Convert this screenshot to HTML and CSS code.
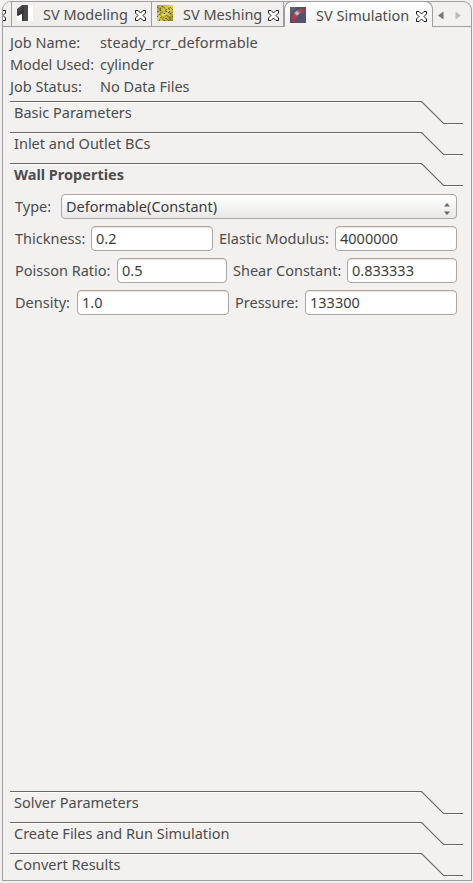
FILE: index.html
```html
<!DOCTYPE html>
<html lang="en">
<head>
<meta charset="utf-8">
<title>SV Simulation</title>
<link rel="stylesheet" href="styles.css">
</head>
<body>
<svg width="0" height="0" class="defs">
  <symbol id="close" viewBox="0 0 11 11"><path d="M.5.5h2.500L5.500 3 8 .5h2.500V3L8 5.500 10.500 8v2.500H8L5.500 8 3 10.500H.5V8L3 5.500.5 3z" fill="#fff" stroke="#111" stroke-width=".95"/></symbol>
  <symbol id="fold" viewBox="0 0 453 25"><path d="M0 1.500H411.500L433.500 23.500H453" fill="none" stroke="#fff"/><path d="M0 .5H411.500L433.500 22.500H453" fill="none" stroke="#69666a" stroke-width="1.100"/></symbol>
</svg>
<div class="window">
  <nav class="tabs">
    <div class="tab cut"><svg class="x"><use href="#close"/></svg></div>
    <div class="tab modeling">
      <svg class="icon" viewBox="0 0 16 16"><path fill="#fff" d="M0 0h16v16H0z"/><path fill="#484848" d="M0 4 5 0h6v16H5V9L0 11z"/><path fill="#353535" d="M5 1h1.500v14H5zM1 8l4-3v3l-4 3z"/></svg>
      <span>SV Modeling</span><svg class="x"><use href="#close"/></svg>
    </div>
    <div class="tab meshing">
      <svg class="icon" viewBox="0 0 16 16"><defs><linearGradient id="gold" x2="1" y2="1"><stop stop-color="#a89b32"/><stop offset=".5" stop-color="#e5d856"/><stop offset="1" stop-color="#8e822b"/></linearGradient></defs><path fill="url(#gold)" d="M0 0h16v16H0z"/><path d="m0 2 3 2 3-3 3 4 4-3 3 3M0 7l4-2 3 4 3-3 3 3 3-2M0 12l3-3 3 4 4-3 2 3 4-2M2 16l2-4 3 4 2-3 3 3 2-3M3 4l1 5M9 5l-2 4M12 3l1 6" fill="none" stroke="#5b541b" stroke-width=".9" stroke-dasharray="2 1"/></svg>
      <span>SV Meshing</span><svg class="x"><use href="#close"/></svg>
    </div>
    <div class="tab active">
      <svg class="icon" viewBox="0 0 16 16"><defs><linearGradient id="flow" x1="1" y1="0" x2=".1" y2="1"><stop stop-color="#863f50"/><stop offset=".3" stop-color="#b04a55"/><stop offset=".48" stop-color="#d9cbd2"/><stop offset=".62" stop-color="#c0444a"/><stop offset="1" stop-color="#8b3648"/></linearGradient></defs><path fill="#50546f" d="M0 0h16v16H0z"/><path fill="#625f79" d="M0 0h7L0 8z"/><path d="M2 16C4 8 7 3.500 16 2.500" fill="none" stroke="url(#flow)" stroke-width="4"/></svg>
      <span>SV Simulation</span><svg class="x"><use href="#close"/></svg>
    </div>
    <div class="arrows"><svg viewBox="0 0 38 25"><path d="m5 13.500 5.500-4v8z" fill="#777"/><path d="m28 13.500-5.500-4v8z" fill="#bbb"/></svg></div>
  </nav>
  <main class="pane">
    <dl class="info">
      <dt>Job Name:</dt><dd class="name">steady_rcr_deformable</dd>
      <dt class="model">Model Used:</dt><dd>cylinder</dd>
      <dt>Job Status:</dt><dd>No Data Files</dd>
    </dl>
    <section class="fold"><svg><use href="#fold"/></svg><h2>Basic Parameters</h2></section>
    <section class="fold"><svg><use href="#fold"/></svg><h2>Inlet and Outlet BCs</h2></section>
    <section class="fold open"><svg><use href="#fold"/></svg><h2>Wall Properties</h2></section>
    <form class="form">
      <div class="row type"><label>Type:</label><div class="select"><span>Deformable(Constant)</span><svg viewBox="0 0 8 14"><path d="m4 1 3 3.500H1zM1 9.500h6L4 13z" fill="#666"/></svg></div></div>
      <div class="row thick"><label>Thickness:</label><div class="input">0.2</div><label>Elastic Modulus:</label><div class="input">4000000</div></div>
      <div class="row poisson"><label>Poisson Ratio:</label><div class="input">0.5</div><label>Shear Constant:</label><div class="input">0.833333</div></div>
      <div class="row density"><label>Density:</label><div class="input">1.0</div><label>Pressure:</label><div class="input">133300</div></div>
    </form>
    <div class="bottom">
      <section class="fold"><svg><use href="#fold"/></svg><h2>Solver Parameters</h2></section>
      <section class="fold"><svg><use href="#fold"/></svg><h2>Create Files and Run Simulation</h2></section>
      <section class="fold"><svg><use href="#fold"/></svg><h2>Convert Results</h2></section>
    </div>
  </main>
</div>
</body>
</html>
```
FILE: styles.css
```css
* { box-sizing: border-box; }
body { margin: 0; background: #f2f1f0; color: #4c4c4c; font: 14.5px/22px "Noto Sans", "Open Sans", sans-serif; overflow: hidden; white-space: nowrap; }
svg { display: block; flex: none; }
.defs { position: absolute; }
.window { width: 470px; height: 880px; margin: 1px 1px 2px 2px; display: flex; flex-direction: column; }
.tabs { height: 26px; display: flex; border: 1px solid #a09da2; border-bottom: 0; border-radius: 9px 9px 0 0; overflow: hidden; }
.tab { display: flex; align-items: center; border-right: 1px solid #a09da2; border-bottom: 1px solid #a09da2; padding-left: 5px; background: linear-gradient(#f2f1f0, #efeeed); }
.tab .icon { width: 16px; height: 16px; margin-top: -3px; }
.tab span { width: 86px; margin-left: 10px; }
.x { width: 11px; height: 11px; margin: 2px 0 0 6px; }
.cut { width: 9px; padding: 0; overflow: hidden; justify-content: flex-end; }
.cut .x { margin-right: 5px; }
.modeling { width: 140px; }
.meshing { width: 132px; }
.meshing span { width: 79px; }
.active { width: 149px; border: 1px solid #a09da2; border-bottom: 0; border-radius: 8px 8px 0 0; background: linear-gradient(#fff, #f2f1f0); margin-top: -1px; }
.active .icon { margin-top: 1px; }
.active .x { margin-top: 3px; }
.active span { width: 94px; }
.arrows { width: 38px; border-bottom: 1px solid #a09da2; }
.pane { flex: 1; display: flex; flex-direction: column; border: 1px solid #a09da2; border-top: 0; padding: 4px 7px 0; }
.info { display: grid; grid-template: repeat(3, 22px) / 90px 1fr; margin: 0 0 1px; height: 69px; }
.info dd { margin: 0; }
.info .name { letter-spacing: .1px; }
.info .model { letter-spacing: -.1px; }
.info + .fold { margin-top: 0; }
.fold { height: 31px; display: grid; }
.fold > * { grid-area: 1 / 1; }
.fold svg { width: 453px; height: 25px; }
.fold h2 { font: inherit; margin: 0 0 0 4px; }
.fold.open h2 { font-weight: bold; }
.form { padding: 0 6px 0 5px; display: grid; gap: 7px; }
.row { display: grid; height: 25px; line-height: 25px; align-items: center; }
.thick label + .input + label, .poisson label + .input + label, .density label + .input + label { padding-left: 6px; }
.type { grid-template-columns: 46px 396px; }
.thick { grid-template-columns: 76px 122px 122px 122px; }
.poisson { grid-template-columns: 102px 110px 120px 110px; }
.density { grid-template-columns: 62px 152px 76px 152px; }
.input, .select { height: 25px; border: 1px solid #aaa6a2; border-radius: 4px; padding-left: 4px; line-height: 23px; color: #3c3c3c; background: #fff; box-shadow: inset 0 1px 1px #e8e7e6; }
.select { display: flex; justify-content: space-between; align-items: center; padding-right: 5px; background: linear-gradient(#fff, #eae8e7); box-shadow: none; }
.select svg { width: 8px; height: 14px; margin-top: 5px; }
.bottom { margin-top: auto; height: 89px; }
```
